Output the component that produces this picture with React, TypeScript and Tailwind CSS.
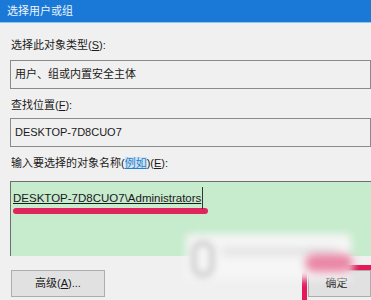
import React from 'react';

const FONT = { fontFamily: '"Liberation Sans", "Noto Sans CJK SC", sans-serif' };

const Label: React.FC<{ children: React.ReactNode; className?: string }> = ({ children, className }) => (
  <div className={`h-[16px] leading-[16px] text-[11px] text-[#1a1a1a] ${className ?? ''}`}>{children}</div>
);

const Field: React.FC<{ children: React.ReactNode; className?: string }> = ({ children, className }) => (
  <div className={`h-[29px] w-[361px] border border-[#8a8a8a] bg-[#f0f0f0] flex items-center pl-[4px] text-[11px] text-[#1a1a1a] ${className ?? ''}`}>
    {children}
  </div>
);

export default function App() {
  return (
    <div className="relative w-[371px] h-[300px] overflow-hidden bg-[#f0f0f0]" style={FONT}>
      {/* title bar */}
      <div className="h-[23px] bg-[#1a78d6] border-b border-[#8cc8f2] flex items-center pl-[7px] text-[11px] text-[#eef5fc]">
        选择用户或组
      </div>

      <div className="pl-[10px]">
        <Label className="mt-[14px] pl-[1px]">
          选择此对象类型(<span className="underline">S</span>):
        </Label>
        <Field className="mt-[7px]">用户、组或内置安全主体</Field>

        <Label className="mt-[8px] pl-[1px]">
          查找位置(<span className="underline">F</span>):
        </Label>
        <Field className="mt-[5px]">DESKTOP-7D8CUO7</Field>

        <Label className="mt-[8px] pl-[1px]">
          输入要选择的对象名称(<span className="text-[#2a7fc9] underline bg-[#cfe3f3]">例如</span>)(<span className="underline">E</span>):
        </Label>

        {/* names box */}
        <div className="mt-[10px] h-[75px] w-[361px] border-l border-t border-[#6e6e6e] bg-[#c6ebcd] pl-[2px] pt-[3px]">
          <div className="relative inline-block">
            <span className="inline-block pr-[1px] border-r border-[#333] h-[22px] leading-[22px] text-[11.5px] text-[#1a1a1a] underline">
              DESKTOP-7D8CUO7\Administrators
            </span>
            <div className="h-[6px] w-[195px] rounded-full bg-[#e2245c] -mt-[1px]" />
          </div>
        </div>

        {/* buttons */}
        <div className="mt-[14px] flex justify-between">
          <button className="h-[27px] w-[94px] border border-[#adadad] bg-[#e1e1e1] text-[11px] text-[#1a1a1a] ml-[1px]">
            高级(<span className="underline">A</span>)...
          </button>
          <button className="h-[27px] w-[63px] border border-[#adadad] bg-[#e1e1e1] text-[11px] text-[#1a1a1a] pr-[6px]">
            确定
          </button>
        </div>
      </div>

      {/* red frame highlight around OK */}
      <div className="absolute left-[302px] top-[265px] w-[90px] h-[60px] border-[5px] border-[#e4195a]" />

      {/* blurred watermark */}
      <div className="absolute left-[186px] top-[234px] w-[165px] h-[45px] bg-[#f6f6f6] blur-[4px]" />
      <div className="absolute left-[191px] top-[240px] w-[24px] h-[38px] rounded-full border-[6px] border-[#d2d2d2] blur-[3px]" />
      <div className="absolute left-[222px] top-[248px] w-[115px] h-[7px] bg-[#e0e0e0] blur-[4px]" />
      <div className="absolute left-[305px] top-[254px] w-[48px] h-[18px] rounded-full bg-[#ea86a6] blur-[4px]" />
    </div>
  );
}
